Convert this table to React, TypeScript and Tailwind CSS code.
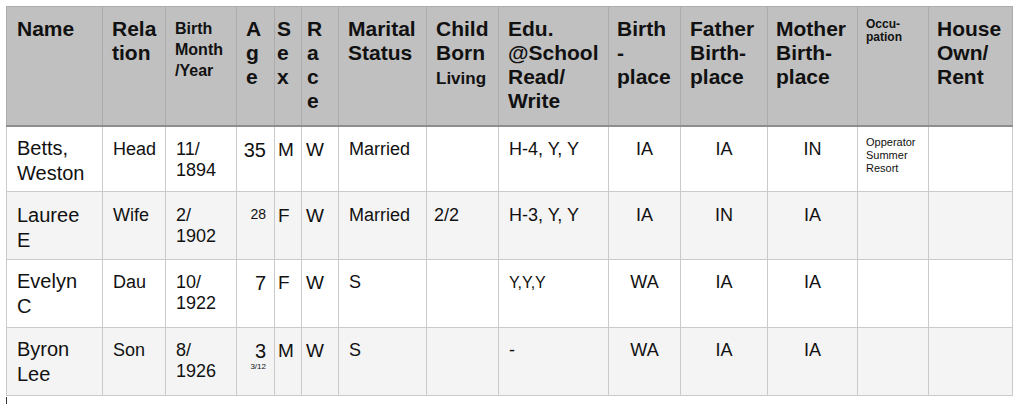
import React from "react";

const widths = [96, 63, 71, 38, 27, 37, 88, 72, 110, 72, 87, 90, 71, 84];

const font = { fontFamily: '"Liberation Sans", Arial, Helvetica, sans-serif' };

type Cell = React.ReactNode;

const rows: { pt: string; ptOther: string; h: string; bg: string; cells: Cell[] }[] = [
  {
    pt: "pt-[9px]",
    ptOther: "pt-[12px]",
    h: "h-[66px]",
    bg: "bg-white",
    cells: [
      <>Betts,<br />Weston</>,
      "Head",
      <>11/<br />1894</>,
      "35",
      "M",
      "W",
      "Married",
      "",
      "H-4, Y, Y",
      "IA",
      "IA",
      "IN",
      <>Opperator<br />Summer<br />Resort</>,
      "",
    ],
  },
  {
    pt: "pt-[11px]",
    ptOther: "pt-[13px]",
    h: "h-[68px]",
    bg: "bg-[#f4f4f4]",
    cells: [
      <>Lauree<br />E</>,
      "Wife",
      <>2/<br />1902</>,
      <span className="text-[14px] leading-[14px] relative -top-[4px]">28</span>,
      "F",
      "W",
      "Married",
      "2/2",
      "H-3, Y, Y",
      "IA",
      "IN",
      "IA",
      "",
      "",
    ],
  },
  {
    pt: "pt-[9px]",
    ptOther: "pt-[12px]",
    h: "h-[68px]",
    bg: "bg-white",
    cells: [
      <>Evelyn<br />C</>,
      "Dau",
      <>10/<br />1922</>,
      "7",
      "F",
      "W",
      "S",
      "",
      <span className="text-[16px]">Y,Y,Y</span>,
      "WA",
      "IA",
      "IA",
      "",
      "",
    ],
  },
  {
    pt: "pt-[9px]",
    ptOther: "pt-[12px]",
    h: "h-[68px]",
    bg: "bg-[#f4f4f4]",
    cells: [
      <>Byron<br />Lee</>,
      "Son",
      <>8/<br />1926</>,
      <span className="inline-flex flex-col items-end">
        <span>3</span>
        <span className="text-[8px] leading-[10px]">3/12</span>
      </span>,
      "M",
      "W",
      "S",
      "",
      "-",
      "WA",
      "IA",
      "IA",
      "",
      "",
    ],
  },
];

const bodyCls = [
  "pl-[10px] text-[20px] leading-[25px]",
  "pl-[10px] text-[18px] leading-[21px]",
  "pl-[10px] text-[18px] leading-[21px]",
  "pr-[8px] text-right text-[20px] leading-[22px]",
  "pl-[3px] text-[19px] leading-[21px]",
  "pl-[4px] text-[19px] leading-[21px]",
  "pl-[10px] text-[18px] leading-[21px]",
  "pl-[7px] text-[18px] leading-[21px]",
  "pl-[10px] text-[18px] leading-[21px]",
  "text-center text-[18px] leading-[21px]",
  "text-center text-[18px] leading-[21px]",
  "text-center text-[18px] leading-[21px]",
  "pl-[8px] text-[11px] leading-[13px]",
  "text-[18px] leading-[21px]",
];

const headers: { content: React.ReactNode; cls: string }[] = [
  { content: "Name", cls: "pl-[10px] pt-[10px] text-[21px] leading-[24px]" },
  { content: <>Rela<br />tion</>, cls: "pl-[9px] pt-[10px] text-[21px] leading-[24px]" },
  { content: <>Birth<br />Month<br />/Year</>, cls: "pl-[9px] pt-[11px] text-[16px] leading-[21px]" },
  { content: <>A<br />g<br />e</>, cls: "pl-[9px] pt-[10px] text-[21px] leading-[24px]" },
  { content: <>S<br />e<br />x</>, cls: "pl-[2px] pt-[10px] text-[21px] leading-[24px]" },
  { content: <>R<br />a<br />c<br />e</>, cls: "pl-[5px] pt-[10px] text-[21px] leading-[24px]" },
  { content: <>Marital<br />Status</>, cls: "pl-[9px] pt-[10px] text-[21px] leading-[24px]" },
  { content: <>Child<br />Born<br /><span className="text-[17px]">Living</span></>, cls: "pl-[9px] pt-[10px] text-[21px] leading-[24px]" },
  { content: <>Edu.<br />@School<br />Read/<br />Write</>, cls: "pl-[9px] pt-[10px] text-[21px] leading-[24px]" },
  { content: <>Birth<br />-<br />place</>, cls: "pl-[8px] pt-[10px] text-[21px] leading-[24px]" },
  { content: <>Father<br />Birth-<br />place</>, cls: "pl-[9px] pt-[10px] text-[21px] leading-[24px]" },
  { content: <>Mother<br />Birth-<br />place</>, cls: "pl-[8px] pt-[10px] text-[21px] leading-[24px]" },
  { content: <>Occu-<br />pation</>, cls: "pl-[8px] pt-[11px] text-[12px] leading-[13px]" },
  { content: <>House<br />Own/<br />Rent</>, cls: "pl-[8px] pt-[10px] text-[21px] leading-[24px]" },
];

export default function App() {
  return (
    <div className="w-[1023px] h-[405px] bg-white text-[#111] overflow-hidden" style={font}>
      <div className="pt-[6px] pl-[6px]">
        <table className="table-fixed border-collapse w-[1006px]">
          <colgroup>
            {widths.map((w, i) => (
              <col key={i} style={{ width: w }} />
            ))}
          </colgroup>
          <thead>
            <tr className="h-[119px] bg-[#c0c0c0]">
              {headers.map((h, i) => (
                <th
                  key={i}
                  className={`align-top text-left font-bold border border-[#acacac] border-b-2 border-b-[#8e8e8e] ${h.cls}`}
                >
                  {h.content}
                </th>
              ))}
            </tr>
          </thead>
          <tbody>
            {rows.map((r, ri) => (
              <tr key={ri} className={`${r.h} ${r.bg}`}>
                {r.cells.map((c, ci) => (
                  <td
                    key={ci}
                    className={`align-top border border-[#cacaca] ${
                      ci === 0 || ci === 12 ? r.pt : r.ptOther
                    } ${bodyCls[ci]}`}
                  >
                    {c}
                  </td>
                ))}
              </tr>
            ))}
          </tbody>
        </table>
        <div className="w-px h-[7px] bg-[#333] mt-[1px]" />
      </div>
    </div>
  );
}
